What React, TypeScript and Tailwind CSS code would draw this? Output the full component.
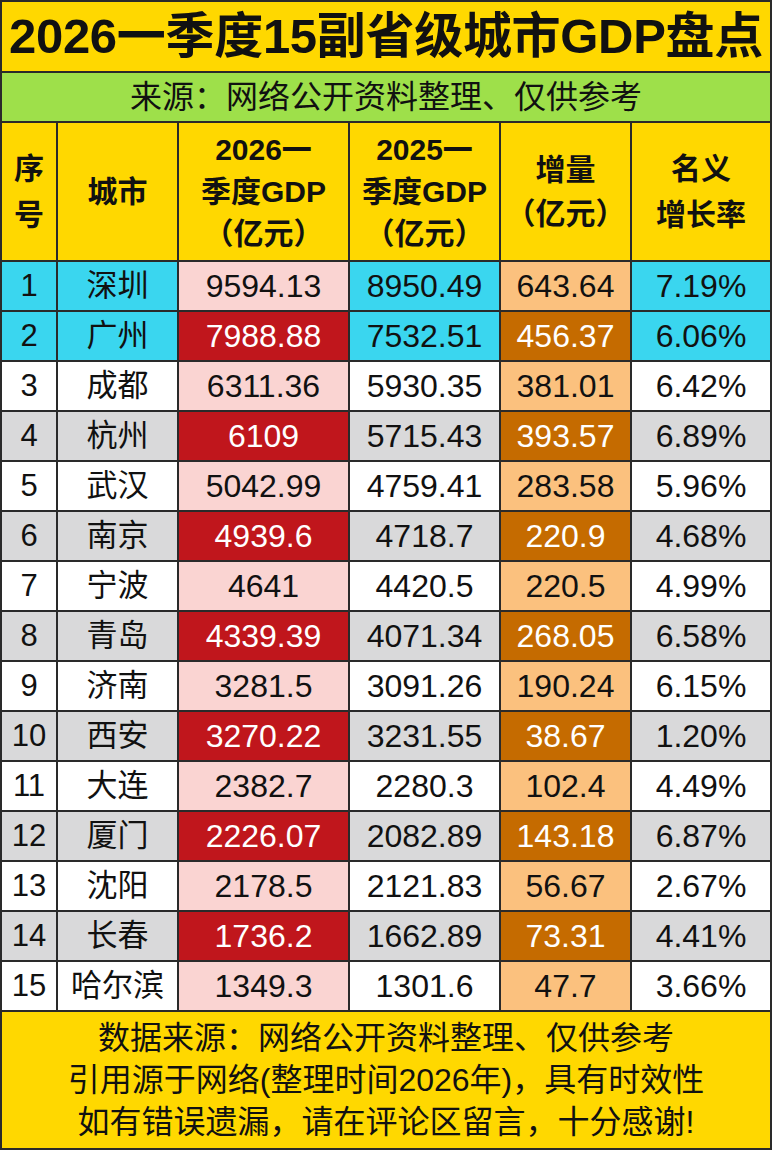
import React from 'react';

type Row = {
  no: number;
  city: string;
  gdp26: string;
  gdp25: string;
  inc: string;
  rate: string;
};

const rows: Row[] = [
  { no: 1, city: '深圳', gdp26: '9594.13', gdp25: '8950.49', inc: '643.64', rate: '7.19%' },
  { no: 2, city: '广州', gdp26: '7988.88', gdp25: '7532.51', inc: '456.37', rate: '6.06%' },
  { no: 3, city: '成都', gdp26: '6311.36', gdp25: '5930.35', inc: '381.01', rate: '6.42%' },
  { no: 4, city: '杭州', gdp26: '6109', gdp25: '5715.43', inc: '393.57', rate: '6.89%' },
  { no: 5, city: '武汉', gdp26: '5042.99', gdp25: '4759.41', inc: '283.58', rate: '5.96%' },
  { no: 6, city: '南京', gdp26: '4939.6', gdp25: '4718.7', inc: '220.9', rate: '4.68%' },
  { no: 7, city: '宁波', gdp26: '4641', gdp25: '4420.5', inc: '220.5', rate: '4.99%' },
  { no: 8, city: '青岛', gdp26: '4339.39', gdp25: '4071.34', inc: '268.05', rate: '6.58%' },
  { no: 9, city: '济南', gdp26: '3281.5', gdp25: '3091.26', inc: '190.24', rate: '6.15%' },
  { no: 10, city: '西安', gdp26: '3270.22', gdp25: '3231.55', inc: '38.67', rate: '1.20%' },
  { no: 11, city: '大连', gdp26: '2382.7', gdp25: '2280.3', inc: '102.4', rate: '4.49%' },
  { no: 12, city: '厦门', gdp26: '2226.07', gdp25: '2082.89', inc: '143.18', rate: '6.87%' },
  { no: 13, city: '沈阳', gdp26: '2178.5', gdp25: '2121.83', inc: '56.67', rate: '2.67%' },
  { no: 14, city: '长春', gdp26: '1736.2', gdp25: '1662.89', inc: '73.31', rate: '4.41%' },
  { no: 15, city: '哈尔滨', gdp26: '1349.3', gdp25: '1301.6', inc: '47.7', rate: '3.66%' },
];

const cell = 'flex items-center justify-center text-center';

export default function App() {
  // base colour of the plain columns: top two rows are cyan, then white / gray stripes
  const rowBg = (no: number) => {
    if (no <= 2) return 'bg-[#3ad6ef]';
    return no % 2 === 0 ? 'bg-[#d9d9da]' : 'bg-white';
  };

  return (
    <div
      className="w-[772px] h-[1150px] bg-[#2a2a2a] p-[2px] grid grid-cols-[54px_119px_169px_149px_129px_138px] grid-rows-[69px_48px_137px_repeat(15,48px)_136px] gap-[2px] text-[#111]"
      style={{ fontFamily: '"Liberation Sans", "Noto Sans CJK SC", sans-serif' }}
    >
      {/* Title */}
      <div className={`${cell} col-span-6 bg-[#ffd800] text-[49px] font-bold tracking-[-0.3px]`}>
        2026一季度15副省级城市GDP盘点
      </div>

      {/* Source line */}
      <div className={`${cell} col-span-6 bg-[#9ee04a] text-[32px]`}>
        来源：网络公开资料整理、仅供参考
      </div>

      {/* Header */}
      <div className={`${cell} flex-col bg-[#ffd800] text-[30px] font-bold leading-[46px]`}>
        <span>序</span>
        <span>号</span>
      </div>
      <div className={`${cell} bg-[#ffd800] text-[30px] font-bold`}>城市</div>
      <div className={`${cell} flex-col bg-[#ffd800] text-[30px] font-bold leading-[42px]`}>
        <span>2026一</span>
        <span>季度GDP</span>
        <span>（亿元）</span>
      </div>
      <div className={`${cell} flex-col bg-[#ffd800] text-[30px] font-bold leading-[42px]`}>
        <span>2025一</span>
        <span>季度GDP</span>
        <span>（亿元）</span>
      </div>
      <div className={`${cell} flex-col bg-[#ffd800] text-[30px] font-bold leading-[44px]`}>
        <span>增量</span>
        <span>（亿元）</span>
      </div>
      <div className={`${cell} flex-col bg-[#ffd800] text-[30px] font-bold leading-[46px]`}>
        <span>名义</span>
        <span>增长率</span>
      </div>

      {/* Data rows */}
      {rows.map((r) => {
        const even = r.no % 2 === 0;
        return (
          <React.Fragment key={r.no}>
            <div className={`${cell} ${rowBg(r.no)} text-[31px]`}>{r.no}</div>
            <div className={`${cell} ${rowBg(r.no)} text-[31px]`}>{r.city}</div>
            <div
              className={`${cell} text-[32px] ${even ? 'bg-[#c0161c] text-white' : 'bg-[#fad4d2]'}`}
            >
              {r.gdp26}
            </div>
            <div className={`${cell} ${rowBg(r.no)} text-[32px]`}>{r.gdp25}</div>
            <div
              className={`${cell} text-[32px] ${even ? 'bg-[#c56b00] text-white' : 'bg-[#fbc17e]'}`}
            >
              {r.inc}
            </div>
            <div className={`${cell} ${rowBg(r.no)} text-[32px]`}>{r.rate}</div>
          </React.Fragment>
        );
      })}

      {/* Footer */}
      <div className={`${cell} col-span-6 flex-col bg-[#ffd800] text-[32px] leading-[42px]`}>
        <span>数据来源：网络公开资料整理、仅供参考</span>
        <span>引用源于网络(整理时间2026年)，具有时效性</span>
        <span>如有错误遗漏，请在评论区留言，十分感谢!</span>
      </div>
    </div>
  );
}
